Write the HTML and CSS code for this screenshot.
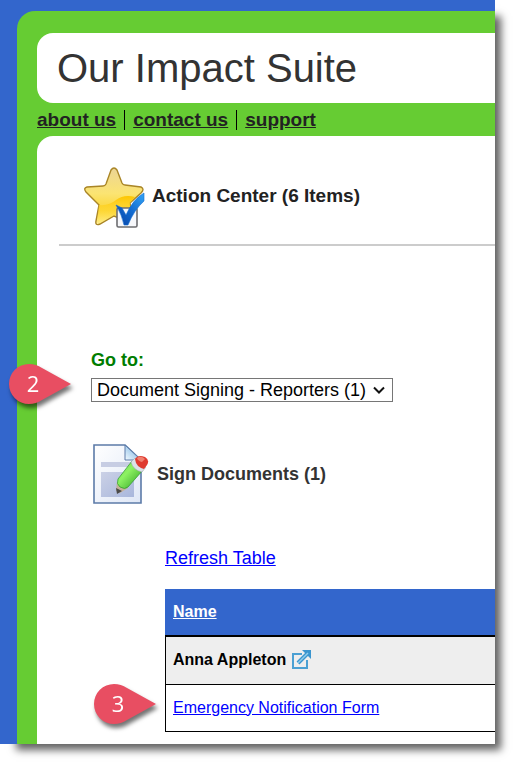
FILE: index.html
```html
<!DOCTYPE html>
<html lang="en">
<head>
<meta charset="utf-8">
<title>Our Impact Suite</title>
<link rel="stylesheet" href="styles.css">
</head>
<body>
<div class="window">
  <div class="shell">
    <header class="banner"><h1>Our Impact Suite</h1></header>
    <nav class="nav">
      <a href="#about">about us</a>
      <a href="#contact">contact us</a>
      <a href="#support">support</a>
    </nav>
    <main class="content">
      <section class="action">
        <svg class="action-icon" viewBox="0 0 64 64" aria-hidden="true">
          <defs>
            <linearGradient id="gold" x1="0" y1="0" x2="0" y2="1">
              <stop offset="0" stop-color="#ecd596"/><stop offset=".45" stop-color="#fbe472"/><stop offset=".75" stop-color="#fbd535"/><stop offset="1" stop-color="#fff0a0"/>
            </linearGradient>
            <linearGradient id="glow" x1="0" y1="0" x2="0" y2="1">
              <stop offset="0" stop-color="#fdc500"/><stop offset="1" stop-color="#ffe75e" stop-opacity=".3"/>
            </linearGradient>
            <linearGradient id="tick" x1="1" y1="0" x2="0" y2="1">
              <stop offset="0" stop-color="#35a5f5"/><stop offset=".5" stop-color="#126bd0"/><stop offset="1" stop-color="#0742a5"/>
            </linearGradient>
          </defs>
          <path d="M27 4Q30 0 33 4L38 17Q39 19 41 19L57 21Q61 23 57 27L46 37L49 54Q47 57 43 55L30 50L16 58Q11 60 12 55L15 39L2 26Q-1 22 3 21L19 20Q21 20 22 18Z" fill="url(#gold)" stroke="#a98526" stroke-width="1.4"/>
          <path d="M15 39Q25 40 32 34Q40 28 51 31L46 37L48 52L43 54L30 49L16 57Q13 58 13 55Z" fill="url(#glow)"/>
          <rect x="33" y="42" width="20" height="19" rx="1.5" fill="#f7f8fb" stroke="#6d6d70" stroke-width="1.6"/>
          <path d="M32 39L38 42L42 49Q49 33 60 27V35Q50 44 44 59H40Q38 49 32 39Z" fill="url(#tick)" stroke="#126bd0" stroke-width=".6"/>
        </svg>
        <h2>Action Center (6 Items)</h2>
      </section>
      <section class="work">
        <form class="goto">
          <label for="goto">Go to:</label>
          <div class="picker">
            <select id="goto"><option>Document Signing - Reporters (1)</option></select>
            <svg class="chevron" viewBox="0 0 14 8" aria-hidden="true"><path d="M2 1.500L7 6.500L12 1.500" fill="none" stroke="#111" stroke-width="2"/></svg>
            <svg class="callout callout-two" viewBox="0 0 62 40"><path d="M20 0Q27 0 33 4L62 20L33 36Q27 40 20 40A20 20 0 0 1 20 0Z"/><text x="24" y="28">2</text></svg>
          </div>
        </form>
        <div class="sign">
          <svg class="sign-icon" viewBox="0 0 58 64" aria-hidden="true">
            <defs>
              <linearGradient id="sheet" x1="0" y1="0" x2="1" y2="1"><stop offset="0" stop-color="#fff"/><stop offset="1" stop-color="#dfe7f6"/></linearGradient>
              <linearGradient id="panel" x1="0" y1="0" x2="1" y2="1"><stop offset="0" stop-color="#cbd1e6"/><stop offset="1" stop-color="#a9b7dc"/></linearGradient>
              <linearGradient id="pen" x1="0" y1="0" x2="1" y2="1"><stop offset="0" stop-color="#6ecb50"/><stop offset=".4" stop-color="#8df263"/><stop offset="1" stop-color="#279a1c"/></linearGradient>
              <linearGradient id="fold" x1="0" y1="1" x2="1" y2="0"><stop offset="0" stop-color="#f3faff"/><stop offset="1" stop-color="#62a6dd"/></linearGradient>
            </defs>
            <path d="M3 3H34L50 18V61H3Z" fill="url(#sheet)" stroke="#5c7ba8" stroke-width="1.6"/>
            <path d="M34 3L50 18H34Z" fill="url(#fold)" stroke="#5c7ba8"/>
            <path d="M10 20H44V25H10Z" fill="#c7cde3"/>
            <path d="M10 30H43V55H10Z" fill="url(#panel)"/>
            <path d="M26 40L25 49L29 51L37 46Z" fill="#c3b09a"/>
            <path d="M25 46L26 52L31 49Z" fill="#4a4a4a"/>
            <path d="M41 19L52 28L37 45Q34 48 29 45Q25 42 27 37Z" fill="url(#pen)" stroke="#2d962b" stroke-width=".7"/>
            <path d="M40 20L44 16L55 25L51 30Q42 28 40 20Z" fill="#dce2e9" stroke="#98a0aa" stroke-width=".5"/>
            <path d="M44 17Q47 12 54 15Q59 18 56 23L53 27Q45 25 44 17Z" fill="#df3b30"/>
            <path d="M46 16Q50 13 54 17L51 20Q47 19 46 16Z" fill="#f08070"/>
          </svg>
          <h3>Sign Documents (1)</h3>
        </div>
        <div class="documents">
          <a class="refresh" href="#refresh">Refresh Table</a>
          <table>
            <thead><tr><th><a href="#name">Name</a></th></tr></thead>
            <tbody>
              <tr class="person"><td>Anna Appleton <a href="#anna" aria-label="Open Anna Appleton"><svg class="open-icon" viewBox="0 0 20 20" aria-hidden="true"><path d="M11 4H2V18H16V10" fill="none" stroke="#4ba0d3" stroke-width="2"/><path d="M7 13L16 4" stroke="#3a95cf" stroke-width="4"/><path d="M11 0H20V9Z" fill="#3a95cf"/><path d="M7 13L17 3" stroke="#8fcdec" stroke-width="1.500"/></svg></a></td></tr>
              <tr><td><a href="#form">Emergency Notification Form</a><svg class="callout callout-three" viewBox="0 0 62 40"><path d="M20 0Q27 0 33 4L62 20L33 36Q27 40 20 40A20 20 0 0 1 20 0Z"/><text x="24" y="28">3</text></svg></td></tr>
            </tbody>
          </table>
        </div>
      </section>
    </main>
  </div>
</div>
</body>
</html>
```
FILE: styles.css
```css
* { box-sizing: border-box; }
body {
  margin: 0;
  padding: 0 23px 23px 0;
  background: #fff;
  color: #222;
  font-family: "Liberation Sans", Arial, sans-serif;
  font-size: 18px;
  line-height: 20px;
}
h1, h2, h3 { margin: 0; }
svg { display: block; }
a { color: #00f; }
.window {
  padding: 11px 0 0 17px;
  background: #36c;
  box-shadow: 11px 11px 8px -5px rgba(0, 0, 0, .62);
}
.shell {
  padding: 22px 0 0 20px;
  background: #6c3;
  border-top-left-radius: 18px;
}
.banner {
  padding: 11px 20px;
  background: #fff;
  border-radius: 16px 0 0 16px;
}
.banner h1 {
  color: #333;
  font-size: 40px;
  font-weight: 400;
  line-height: 48px;
}
.nav {
  display: flex;
  padding: 7px 0 6px;
  font-size: 19px;
  font-weight: 700;
}
.nav a { color: #222; }
.nav a + a {
  margin-left: 8px;
  padding-left: 8px;
  border-left: 1px solid #000;
}
.content {
  padding: 30px 0 12px 22px;
  background: #fff;
  border-top-left-radius: 16px;
}
.action {
  display: flex;
  align-items: center;
  gap: 4px;
  padding: 0 0 14px 25px;
  border-bottom: 2px solid #ccc;
}
.action h2 { font-size: 19px; padding-bottom: 4px; }
.action-icon { width: 64px; height: 64px; }
.work { padding: 104px 0 0 32px; }
.goto label {
  display: block;
  margin-bottom: 8px;
  color: #007d00;
  font-weight: 700;
}
.picker { position: relative; width: 302px; }
.picker select {
  display: block;
  width: 100%;
  height: 24px;
  padding: 0 5px;
  border: 1px solid #767676;
  border-radius: 0;
  appearance: none;
  background: #fff;
  color: #000;
  font: inherit;
}
.chevron {
  position: absolute;
  top: 8px;
  right: 7px;
  width: 14px;
  height: 8px;
  pointer-events: none;
}
.callout {
  position: absolute;
  width: 62px;
  height: 40px;
  overflow: visible;
  filter: drop-shadow(2px 4px 2px rgba(0, 0, 0, .55));
  fill: #e84e62;
}
.callout text {
  fill: #fff;
  font-family: "Open Sans", sans-serif;
  font-size: 22px;
  text-anchor: middle;
}
.callout-two { top: -14px; left: -82px; }
.callout-three { top: -1px; left: -72px; }
.sign {
  display: flex;
  align-items: center;
  gap: 8px;
  padding-top: 40px;
}
.sign-icon { width: 58px; height: 64px; }
.sign h3 { color: #333; font-size: 18px; }
.documents { padding: 42px 0 0 74px; }
.refresh { display: block; margin-bottom: 21px; }
table {
  width: 100%;
  border-collapse: collapse;
  font-size: 16px;
}
th, td { height: 47px; padding: 0 7px; text-align: left; }
th {
  background: #36c;
  border-bottom: 2px solid #000;
  border-left: 1px solid #36c;
}
th a { color: #fff; }
td { position: relative; border: solid #000; border-width: 0 0 1px 1px; }
.person td { height: 48px; background: #eee; color: #000; font-weight: 700; }
.person a { display: inline-block; vertical-align: bottom; }
.open-icon { width: 20px; height: 20px; }
```
